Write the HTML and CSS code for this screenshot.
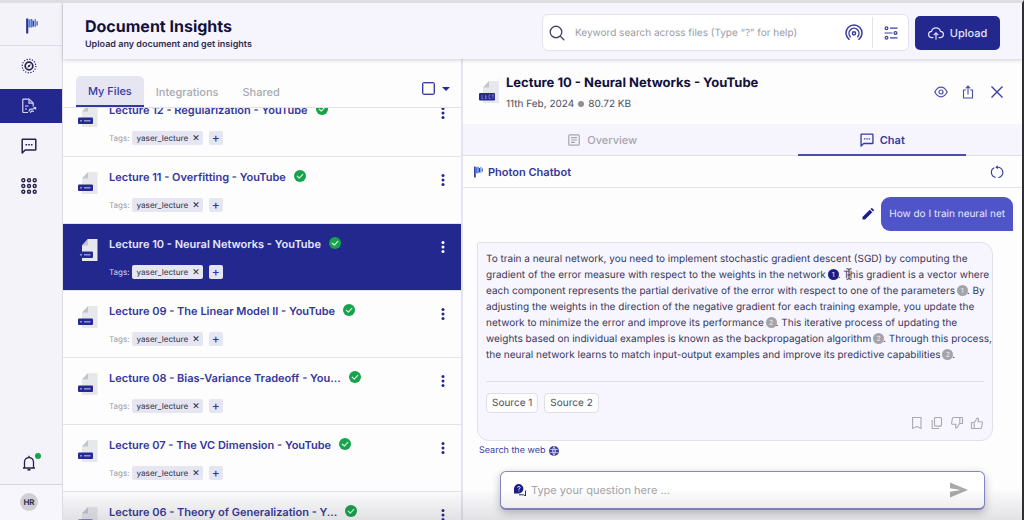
FILE: index.html
```html
<!DOCTYPE html>
<html lang="en">
<head>
<meta charset="utf-8">
<title>Document Insights</title>
<link rel="stylesheet" href="styles.css">
</head>
<body>
<svg class="defs" aria-hidden="true">
  <symbol id="photon" viewBox="0 0 22 30"><path d="M2 1v28" stroke="#2b2e93" stroke-width="4"/><path d="M6 3v15M10 2v16" stroke="#4a7ad8" stroke-width="3.400"/><path d="M13.500 5v11" stroke="#2b3fa8" stroke-width="3"/><path d="M17 2v15" stroke="#4a7ad8" stroke-width="2.400"/><path d="M20.500 6v8" stroke="#3a4db4" stroke-width="2.400"/></symbol>
  <symbol id="file" viewBox="0 0 20 22"><path d="M10 0h9.500v22H4V6.500z" fill="#e6e8ec"/><path d="M10 0v6.500H4z" fill="#c3c6cc"/><rect x="0" y="12.500" width="15" height="6.500" rx="1" fill="#262a90"/><path d="M2 15.800h2M6 15.800h6.500" stroke="#8f93d6" stroke-width="1.600"/></symbol>
  <symbol id="file-lect" viewBox="0 0 20 22"><path d="M10 0h10v22H4V6.500z" fill="#e6e8ec"/><path d="M10 0v6.500H4z" fill="#c3c6cc"/><rect x="0" y="12" width="16" height="7.500" rx="1" fill="#262a90"/><path d="M3 14v3.500h1.500M6.500 14v3.500h1.500M6.500 15.700h1.300M11.500 14h-1.500v3.500h1.500M13 14h2M14 14v3.500" fill="none" stroke="#8f93d6" stroke-width=".7"/></symbol>
  <symbol id="ok" viewBox="0 0 12 12"><circle cx="6" cy="6" r="6" fill="#16a34a"/><path d="M3.300 6.200l2 1.900 3.500-3.700" fill="none" stroke="#d9f3e2" stroke-width="1.200" stroke-linecap="round" stroke-linejoin="round"/></symbol>
  <symbol id="dots" viewBox="0 0 4 14"><circle cx="2" cy="2.500" r="1.500"/><circle cx="2" cy="7" r="1.500"/><circle cx="2" cy="11.500" r="1.500"/></symbol>
  <symbol id="chat" viewBox="0 0 16 16"><path d="M1.200 15V1.800q0-.6.6-.6h12.400q.6 0 .6.6v9.600q0 .6-.6.6H4.200z" fill="none" stroke="currentColor" stroke-width="1.500" stroke-linejoin="round"/><path d="M4.500 6.700h1.600M7.200 6.700h1.600M9.900 6.700h1.600" stroke="currentColor" stroke-width="1.500"/></symbol>
  <symbol id="up" viewBox="0 0 14 14"><path d="M4.700 11h-1.400a2.700 2.700 0 0 1-.2-5.400 4 4 0 0 1 7.800 0 2.700 2.700 0 0 1-.2 5.400H9.300" fill="none" stroke="currentColor" stroke-width="1"/><path d="M7 13V7M5 8.800l2-2 2 2" fill="none" stroke="currentColor" stroke-width="1"/></symbol>
  <symbol id="thumb" viewBox="0 0 14 14"><path d="M1.500 6.500h2.700v6H1.500zM4.200 6.800L7.200 2q1.500-.1 1.300 1.500L8 5.700h3.400q1.200 0 1 1.300l-.8 4.400q-.3 1.100-1.400 1.100h-6" fill="none" stroke="currentColor" stroke-width="1.100" stroke-linejoin="round"/></symbol>
</svg>
<div class="app">
  <nav class="rail" aria-label="Main">
    <a class="rail-logo" href="#" aria-label="Photon"><svg class="logo"><use href="#photon"/></svg></a>
    <a class="rail-item" href="#" aria-label="Explore"><svg class="i16" viewBox="0 0 16 16"><circle cx="8" cy="8" r="6.800" fill="none" stroke="#25234d" stroke-width="1.200" stroke-dasharray="1.200 1.470"/><circle cx="8" cy="8" r="3.800" fill="none" stroke="#25234d" stroke-width="1.700"/><path d="M6.300 9.700l1-2.400 2.400-1-1 2.400z" fill="#25234d"/></svg></a>
    <a class="rail-item active" href="#" aria-label="Documents"><svg class="i16" viewBox="0 0 16 16" fill="none" stroke="#d5d6f2" stroke-width="1.200"><path d="M7 14.500H2.600q-.8 0-.8-.8V1.900q0-.8.8-.8H8l4.200 4v3.300"/><path d="M8 1.200v4h4M4 8h3.500M4 11h2"/><path d="M8 13.500q.3-2.800 2.500-2.400t4-1.400M12.600 9.500h2v2M9 14.500l2-1.500 2 .5"/></svg></a>
    <a class="rail-item" href="#" aria-label="Chats"><svg class="i16 navy"><use href="#chat"/></svg></a>
    <a class="rail-item" href="#" aria-label="Apps"><svg class="i16" viewBox="0 0 16 16" fill="none" stroke="#25234d" stroke-width="1.400"><circle cx="2.300" cy="2.300" r="1.500"/><circle cx="8" cy="2.300" r="1.500"/><circle cx="13.700" cy="2.300" r="1.500"/><circle cx="2.300" cy="8" r="1.500"/><circle cx="8" cy="8" r="1.500"/><circle cx="13.700" cy="8" r="1.500"/><circle cx="2.300" cy="13.700" r="1.500"/><circle cx="8" cy="13.700" r="1.500"/><circle cx="13.700" cy="13.700" r="1.500"/></svg></a>
    <button class="bell" aria-label="Notifications"><svg class="i16" viewBox="0 0 16 16" fill="none" stroke="#25234d" stroke-width="1.300"><path d="M2 13h12M3.500 13V7a4.500 4.500 0 0 1 9 0v6M8 2.500V.8"/><path d="M6.500 14.800h3" stroke-width="1.600"/></svg><span class="dot"></span></button>
    <div class="user"><span class="avatar">HR</span></div>
  </nav>
  <div class="main">
    <header class="top">
      <div class="heading"><h1>Document Insights</h1><p>Upload any document and get insights</p></div>
      <div class="search">
        <svg class="i16" viewBox="0 0 16 16" fill="none" stroke="#4a4869" stroke-width="1.400" stroke-linecap="round"><circle cx="7" cy="7" r="5.800"/><path d="M11.300 11.300l3.500 3.500"/></svg>
        <input type="search" aria-label="Keyword search" placeholder="Keyword search across files (Type “?” for help)">
        <button aria-label="Semantic search"><svg class="i18" viewBox="0 0 18 18" fill="none" stroke="#3b3e9e" stroke-width="1.500" stroke-linecap="round"><path d="M4 15.300a8 8 0 1 1 10 0"/><path d="M5.300 12.700a5 5 0 1 1 7.400 0"/><circle cx="9" cy="9.300" r="1.600"/></svg></button>
        <button class="filter" aria-label="Filters"><svg class="i14" viewBox="0 0 14 14" fill="none" stroke="#3b3e9e" stroke-width="1.200"><circle cx="2.500" cy="2.200" r="1.400"/><path d="M6 2.200h7.500M.5 7h8M6 11.800h7.500"/><circle cx="11.500" cy="7" r="1.400"/><circle cx="2.500" cy="11.800" r="1.400"/></svg></button>
      </div>
      <button class="upload"><svg class="i16"><use href="#up"/></svg>Upload</button>
    </header>
    <div class="columns">
      <section class="files">
        <div class="tabs">
          <button class="tab on">My Files</button><button class="tab">Integrations</button><button class="tab">Shared</button>
          <input class="all" type="checkbox" aria-label="Select all files">
          <button class="caret" aria-label="Selection options"></button>
        </div>
        <div class="scroll">
        <ul class="list">
          <li class="row"><svg class="file"><use href="#file"/></svg><div class="info"><h2>Lecture 12 - Regularization - YouTube<svg class="ok"><use href="#ok"/></svg></h2><div class="tags"><span>Tags:</span><button class="tag">yaser_lecture <b>✕</b></button><button class="add" aria-label="Add tag">+</button></div></div><button class="more" aria-label="More"><svg><use href="#dots"/></svg></button></li>
          <li class="row"><svg class="file"><use href="#file"/></svg><div class="info"><h2>Lecture 11 - Overfitting - YouTube<svg class="ok"><use href="#ok"/></svg></h2><div class="tags"><span>Tags:</span><button class="tag">yaser_lecture <b>✕</b></button><button class="add" aria-label="Add tag">+</button></div></div><button class="more" aria-label="More"><svg><use href="#dots"/></svg></button></li>
          <li class="row selected"><svg class="file"><use href="#file"/></svg><div class="info"><h2>Lecture 10 - Neural Networks - YouTube<svg class="ok"><use href="#ok"/></svg></h2><div class="tags"><span>Tags:</span><button class="tag">yaser_lecture <b>✕</b></button><button class="add" aria-label="Add tag">+</button></div></div><button class="more" aria-label="More"><svg><use href="#dots"/></svg></button></li>
          <li class="row"><svg class="file"><use href="#file"/></svg><div class="info"><h2>Lecture 09 - The Linear Model II - YouTube<svg class="ok"><use href="#ok"/></svg></h2><div class="tags"><span>Tags:</span><button class="tag">yaser_lecture <b>✕</b></button><button class="add" aria-label="Add tag">+</button></div></div><button class="more" aria-label="More"><svg><use href="#dots"/></svg></button></li>
          <li class="row"><svg class="file"><use href="#file"/></svg><div class="info"><h2>Lecture 08 - Bias-Variance Tradeoff - You...<svg class="ok"><use href="#ok"/></svg></h2><div class="tags"><span>Tags:</span><button class="tag">yaser_lecture <b>✕</b></button><button class="add" aria-label="Add tag">+</button></div></div><button class="more" aria-label="More"><svg><use href="#dots"/></svg></button></li>
          <li class="row"><svg class="file"><use href="#file"/></svg><div class="info"><h2>Lecture 07 - The VC Dimension - YouTube<svg class="ok"><use href="#ok"/></svg></h2><div class="tags"><span>Tags:</span><button class="tag">yaser_lecture <b>✕</b></button><button class="add" aria-label="Add tag">+</button></div></div><button class="more" aria-label="More"><svg><use href="#dots"/></svg></button></li>
          <li class="row"><svg class="file"><use href="#file"/></svg><div class="info"><h2>Lecture 06 - Theory of Generalization - Y...<svg class="ok"><use href="#ok"/></svg></h2></div><button class="more" aria-label="More"><svg><use href="#dots"/></svg></button></li>
        </ul>
        </div>
      </section>
      <section class="detail">
        <div class="doc">
          <svg class="doc-icon"><use href="#file-lect"/></svg>
          <div class="doc-text"><h2>Lecture 10 - Neural Networks - YouTube</h2><p>11th Feb, 2024 <i></i> 80.72 KB</p></div>
          <div class="doc-actions">
            <button aria-label="Preview"><svg class="i14" viewBox="0 0 14 14" fill="none" stroke="#4b4ea6" stroke-width="1.200"><path d="M.8 7Q3.300 2.200 7 2.200T13.200 7Q10.700 11.800 7 11.800T.8 7z"/><circle cx="7" cy="7" r="2"/></svg></button>
            <button aria-label="Share"><svg class="i14" viewBox="0 0 14 14" fill="none" stroke="#4b4ea6" stroke-width="1.100"><path d="M4.800 5H2.500v8h9V5H9.200M7 9.500V1.200M4.800 3.300L7 1.100l2.200 2.200"/></svg></button>
            <button aria-label="Close"><svg class="i14" viewBox="0 0 14 14" stroke="#3b3e9e" stroke-width="1.400"><path d="M1.500 1.500l11 11M12.500 1.500l-11 11"/></svg></button>
          </div>
        </div>
        <div class="views">
          <button class="view"><svg class="i12" viewBox="0 0 12 12" fill="none" stroke="currentColor" stroke-width="1.200"><rect x=".8" y=".8" width="10.400" height="10.400" rx="1"/><path d="M3 3.700h6M3 6h6M3 8.300h4"/></svg>Overview</button>
          <button class="view on"><svg class="i14"><use href="#chat"/></svg>Chat</button>
        </div>
        <div class="botbar"><svg class="bot"><use href="#photon"/></svg><h3>Photon Chatbot</h3><button aria-label="Reset chat"><svg class="i14" viewBox="0 0 14 14" fill="none" stroke="#3b3e9e" stroke-width="1.200"><path d="M4.300 2.800A5.100 5.100 0 0 0 5.500 12.400M8.300 12.500A5.100 5.100 0 0 0 7.200 2.300H6"/><path d="M7.800.3L5.300 2.300l2.500 2z" fill="#3b3e9e" stroke="none"/></svg></button></div>
        <div class="chat">
          <div class="ask"><button aria-label="Edit question"><svg class="i12" viewBox="0 0 12 12" fill="#1b1d86"><path d="M.5 11.500v-2.500L7.800 1.700l2.500 2.500L3 11.500zM8.500 1L9.300.3q.5-.4 1 0l1.400 1.400q.4.500 0 1l-.7.800z"/></svg></button><p class="bubble">How do I train neural net</p></div>
          <article class="answer">
            <p>To train a neural network, you need to implement stochastic gradient descent (SGD) by computing the<br>
            gradient of the error measure with respect to the weights in the network <sup class="ref hot">1</sup>. This gradient is a vector where<br>
            each component represents the partial derivative of the error with respect to one of the parameters <sup class="ref">1</sup>. By<br>
            adjusting the weights in the direction of the negative gradient for each training example, you update the<br>
            network to minimize the error and improve its performance <sup class="ref">2</sup>. This iterative process of updating the<br>
            weights based on individual examples is known as the backpropagation algorithm <sup class="ref">2</sup>. Through this process,<br>
            the neural network learns to match input-output examples and improve its predictive capabilities <sup class="ref">2</sup>.</p>
            <svg class="cursor" viewBox="0 0 6 12" fill="none" stroke="#333" stroke-width="1"><path d="M.5.800h1.500L3 1.500 4 .800h1.500M3 1.500v9M.5 11.200h1.500L3 10.500l1 .7h1.500M1.500 7h3"/></svg>
            <div class="sources"><button>Source 1</button><button>Source 2</button></div>
            <div class="tools">
              <button aria-label="Bookmark"><svg class="i14" viewBox="0 0 14 14" fill="none" stroke="currentColor" stroke-width="1.100"><path d="M2.600 1.500h8.400v11L6.800 10.600 2.600 12.500z"/></svg></button>
              <button aria-label="Copy"><svg class="i14" viewBox="0 0 14 14" fill="none" stroke="currentColor" stroke-width="1.100"><rect x="4.500" y="1.500" width="7" height="8.600" rx="1"/><path d="M2.200 4v8.500h7"/></svg></button>
              <button aria-label="Dislike"><svg class="i14 flip"><use href="#thumb"/></svg></button>
              <button aria-label="Like"><svg class="i14"><use href="#thumb"/></svg></button>
            </div>
          </article>
          <a class="web" href="#">Search the web <svg class="globe" viewBox="0 0 10 10"><circle cx="5" cy="5" r="5" fill="#3b3e9e"/><path d="M.8 3.500h8.400M.8 6.500h8.400M5 .5v9M5 .5Q1.800 5 5 9.500M5 .5Q8.200 5 5 9.500" fill="none" stroke="#d9daf2" stroke-width=".7"/></svg></a>
          <form class="composer">
            <svg class="i12" viewBox="0 0 12 12"><path d="M11.500 6.500V12L9.500 10.800H5" fill="none" stroke="#23268c" stroke-width="1"/><path d="M0 9.500V4.700a4.700 4.700 0 1 1 4.700 4.700z" fill="#1b1d86"/><path d="M3.500 3.600q.2-1.200 1.300-1.200t1.300 1.100q0 .8-1.200 1.500v.6M4.900 6.500v1" fill="none" stroke="#fff" stroke-width=".9"/></svg>
            <input type="text" aria-label="Question" placeholder="Type your question here ...">
            <button type="button" aria-label="Send"><svg class="send" viewBox="0 0 18 16"><path d="M0 .5L18 8 0 15.500V9.700L11 8 0 6.300z" fill="#a9a9ab"/></svg></button>
          </form>
        </div>
      </section>
    </div>
  </div>
</div>
</body>
</html>
```

FILE: styles.css
```css
* { box-sizing: border-box; }
body { margin: 0; font-family: Inter, "Liberation Sans", sans-serif; text-rendering: geometricPrecision; color: #12103a; background: #fdfdfe; }
h1, h2, h3, p, ul { margin: 0; padding: 0; }
button { font: inherit; color: inherit; text-rendering: inherit; border: 0; padding: 0; background: none; display: flex; align-items: center; justify-content: center; }
input { font: inherit; text-rendering: inherit; border: 0; outline: 0; background: none; min-width: 0; padding: 0; }
svg { display: block; flex: none; }
a { text-decoration: none; }
.defs { position: absolute; width: 0; height: 0; }
.i12 { width: 12px; height: 12px; }
.i14 { width: 14px; height: 14px; }
.i16 { width: 16px; height: 16px; }
.i18 { width: 18px; height: 18px; }
.navy { color: #25234d; }

.app { display: flex; height: 100vh; border-top: 3px solid #dedee2; border-right: 2px solid #2c3032; overflow: hidden; position: relative; }
.app::after { content: ""; position: absolute; left: 63px; right: 0; bottom: 0; height: 32px; background: linear-gradient(rgba(60, 60, 70, 0), rgba(60, 60, 70, .14)); pointer-events: none; }

.rail { width: 63px; flex: none; display: flex; flex-direction: column; background: #f4f3fa; border-right: 1px solid #dddce6; }
.rail-logo { height: 43px; display: flex; align-items: center; justify-content: center; padding-top: 3px; border-bottom: 1px solid #dddce6; }
.logo { width: 12px; height: 16px; margin-left: 2px; }
.rail-item { height: 34px; margin-bottom: 6px; display: flex; align-items: center; padding-left: 21px; }
.rail-logo + .rail-item { margin-top: 3px; }
.active { background: #23288f; }
.bell { margin: auto 0 13px 21px; width: 16px; height: 16px; position: relative; }
.dot { position: absolute; right: -4px; top: -2px; width: 6px; height: 6px; border-radius: 50%; background: #16a34a; }
.user { height: 36px; border-top: 1px solid #d5d4de; background: #f7f6fd; padding: 8px 0 0 20px; }
.avatar { display: flex; width: 18px; height: 18px; border-radius: 50%; background: #d0d0d4; align-items: center; justify-content: center; font-size: 8px; font-weight: 700; color: #33314f; }

.main { flex: 1; min-width: 0; display: flex; flex-direction: column; }
.top { height: 56px; display: flex; align-items: center; padding: 3px 22px 0 22px; background: #f6f5fe; box-shadow: 0 1px 4px rgba(40, 40, 70, .22); position: relative; }
.heading { flex: 1; }
.heading h1 { font-size: 16px; line-height: 22px; font-weight: 700; }
.heading p { font-size: 9px; line-height: 12px; margin-top: 2px; font-weight: 600; color: #2f2d51; }
.search { width: 367px; height: 37px; display: flex; align-items: center; background: #fff; border: 1px solid #e2e2ea; border-radius: 6px; padding-left: 6px; }
.search input { flex: 1; margin-left: 10px; font-size: 10px; }
.search input::placeholder { color: #9b9ba3; opacity: 1; }
.filter { width: 36px; height: 31px; margin-left: 9px; border-left: 1px solid #e2e2ea; }
.upload { width: 85px; height: 34px; margin-left: 6px; background: #23288f; color: #e3e3f7; border-radius: 5px; font-size: 11px; font-weight: 500; gap: 6px; }

.columns { flex: 1; min-height: 0; display: grid; grid-template-columns: 400fr 559fr; }
.files { display: flex; flex-direction: column; min-height: 0; min-width: 0; border-right: 2px solid #e5e4ee; }
.tabs { height: 49px; flex: none; display: flex; align-items: flex-end; padding: 0 10px 0 13px; border-bottom: 1px solid #e0e0e6; }
.tab { height: 31px; padding: 0 12px; font-size: 11px; font-weight: 500; color: #a9a9af; }
.tab.on { background: #e5e6f2; color: #3538a0; border-bottom: 2px solid #3538a0; border-radius: 5px 5px 0 0; }
.all { appearance: none; width: 13px; height: 13px; margin: 0 7px 12px auto; border: 1px solid #3b3e9e; border-radius: 2px; box-shadow: inset 0 0 0 1px #b1b2da; }
.caret { margin: 0 1px 16px 0; width: 8px; border: 4px solid transparent; border-top-color: #262a90; border-bottom: 0; }
.scroll { flex: 1; min-height: 0; overflow: hidden; }
.list { list-style: none; margin-top: -18px; }
.row { height: 67px; display: flex; padding: 12px 16px 0 15px; border-bottom: 1px solid #e3e3ea; color: #33369b; }
.file { width: 20px; height: 22px; margin-top: 3px; }
.info { flex: 1; margin-left: 11px; min-width: 0; }
.info h2 { display: flex; font-size: 11px; line-height: 16px; font-weight: 600; white-space: nowrap; }
.ok { width: 12px; height: 12px; margin: 1px 0 0 8px; }
.tags { display: flex; align-items: center; margin-top: 13px; height: 14px; font-size: 8px; color: #9b9ba3; font-weight: 400; }
.tag { height: 14px; background: #e6e6f2; color: #47465c; border-radius: 2px; margin: 0 6px 0 2px; padding: 0 3px 0 5px; gap: 4px; font-weight: 500; }
.tag b { font-size: 9px; font-weight: 400; color: #26253d; }
.add { width: 14px; height: 14px; background: #e6e6f2; color: #33369b; border-radius: 2px; font-size: 12px; font-weight: 500; line-height: 12px; }
.more { align-self: flex-start; margin-top: 4px; }
.more svg { width: 4px; height: 14px; fill: #23268c; }
.selected { background: #23288f; color: #e7e7f8; }
.selected .tags { color: #d3d3ee; }
.selected .more svg { fill: #fff; }

.detail { display: flex; flex-direction: column; min-width: 0; min-height: 0; }
.doc { display: flex; height: 65px; padding: 14px 18px 0 16px; }
.doc-icon { width: 20px; height: 22px; margin-top: 8px; }
.doc-text { flex: 1; margin-left: 7px; }
.doc-text h2 { font-size: 13px; line-height: 20px; font-weight: 700; white-space: nowrap; }
.doc-text p { display: flex; align-items: center; gap: 4px; font-size: 10px; line-height: 14px; margin-top: 4px; color: #4e4d5c; }
.doc-text i { width: 6px; height: 6px; border-radius: 50%; background: #8e8e94; }
.doc-actions { display: flex; height: 38px; align-items: center; gap: 13px; }
.doc-actions button:last-child { margin-left: 2px; }
.views { display: flex; height: 32px; background: #f6f5fd; border-bottom: 1px solid #dfdfe8; }
.view { flex: 1; gap: 7px; font-size: 11px; font-weight: 500; color: #a5a5ad; position: relative; }
.view.on { color: #3538a0; font-weight: 600; gap: 6px; }
.view.on::after { content: ""; position: absolute; left: 20%; right: 20%; bottom: -1px; height: 2px; background: #4b4ea6; }
.botbar { display: flex; align-items: center; height: 32px; padding: 0 18px 0 11px; border-bottom: 1px solid #e3e3ea; }
.bot { width: 9px; height: 12px; }
.botbar h3 { flex: 1; margin-left: 5px; font-size: 11px; font-weight: 600; color: #33369b; }
.chat { flex: 1; min-height: 0; display: flex; flex-direction: column; padding: 9px 9px 10px 14px; }
.ask { display: flex; justify-content: flex-end; align-items: center; gap: 7px; }
.bubble { height: 34px; padding: 0 8px; display: flex; align-items: center; background: #4f55c8; color: #e8e8fa; border-radius: 9px 9px 0 9px; font-size: 10px; }
.answer { position: relative; margin: 11px 20px 0 0; padding: 8px 8px 10px 8px; background: #f7f6fe; border: 1px solid #e1e1ea; border-radius: 2px 12px 12px 12px; }
.answer p { font-size: 10px; line-height: 16px; color: #38365a; white-space: nowrap; height: 130px; }
.ref { display: inline-flex; width: 11px; height: 11px; margin: 0 -1px; border-radius: 50%; background: #a3a3a8; color: #ededf0; font-size: 7px; line-height: 11px; align-items: center; justify-content: center; vertical-align: 1px; }
.hot { background: #1b1d86; }
.cursor { position: absolute; left: 368px; top: 25px; width: 6px; height: 12px; }
.sources { display: flex; gap: 6px; padding-top: 11px; border-top: 1px solid #dfdfe8; }
.sources button { height: 20px; padding: 0 5px; border: 1px solid #dfdfe6; border-radius: 4px; background: #fdfdfe; font-size: 10px; color: #4e4d5c; }
.tools { display: flex; justify-content: flex-end; gap: 6px; margin-top: 3px; color: #a9a9b3; }
.flip { transform: rotate(180deg); }
.web { display: flex; align-items: center; gap: 4px; margin: 4px 0 0 2px; font-size: 9px; line-height: 12px; color: #3b3e9e; }
.globe { width: 10px; height: 10px; }
.composer { display: flex; align-items: center; height: 39px; margin: auto 28px 0 23px; padding: 0 16px 0 13px; background: #fff; border: 1px solid #8587c2; border-bottom-width: 2px; border-radius: 6px; box-shadow: 0 3px 8px rgba(40, 40, 60, .3); }
.composer input { flex: 1; margin-left: 5px; font-size: 11px; }
.composer input::placeholder { color: #a3a3a8; opacity: 1; }
.send { width: 18px; height: 16px; }
```
